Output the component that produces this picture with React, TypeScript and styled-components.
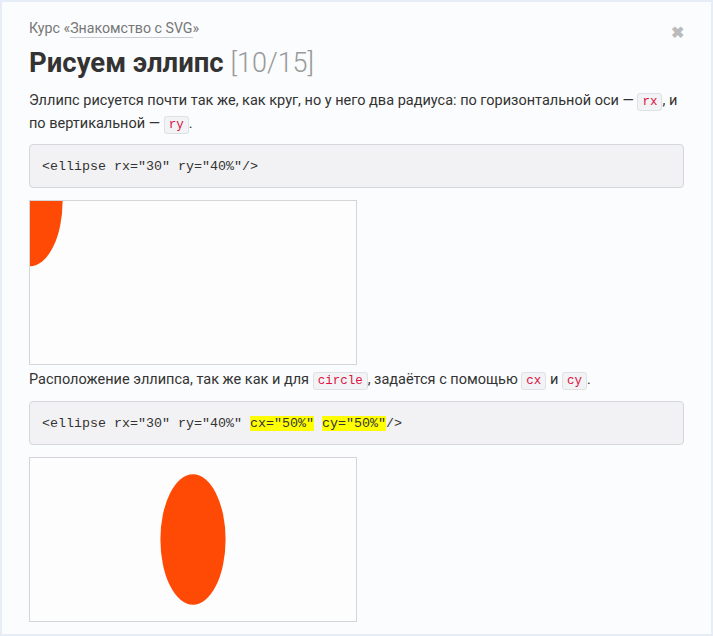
import React from "react";
import styled, { createGlobalStyle } from "styled-components";

const Global = createGlobalStyle`
  html, body { margin: 0; padding: 0; background: #e9eff7; }
  body { font-family: Roboto, "Liberation Sans", Arial, sans-serif; }
`;

const Frame = styled.div`
  width: 713px;
  height: 636px;
  box-sizing: border-box;
  border: 2px solid #e6edf6;
  background: #fbfcfd;
  overflow: hidden;
`;

const Panel = styled.div`
  position: relative;
  padding: 16px 27px 0 27px;
  color: #333;
`;

const Close = styled.span`
  position: absolute;
  top: 21px;
  right: 27px;
  font-size: 16px;
  font-weight: bold;
  color: #bbb;
  line-height: 20px;
`;

const Crumb = styled.div`
  font-size: 14.2px;
  line-height: 20px;
  color: #777;
`;

const CrumbLink = styled.span`
  border-bottom: 1px solid #c9ccd2;
  padding-bottom: 1px;
`;

const Title = styled.h1`
  margin: 8px 0 0 0;
  font-size: 27.5px;
  line-height: 34px;
  font-weight: bold;
  color: #333;
`;

const Counter = styled.span`
  font-weight: 300;
  font-size: 27px;
  color: #999;
`;

const Para = styled.p<{ $top?: number }>`
  margin: ${(p) => p.$top ?? 12}px 0 0 0;
  font-size: 14.5px;
  line-height: 22px;
  color: #333;
`;

const Code = styled.code`
  font-family: "Liberation Mono", monospace;
  font-size: 12.5px;
  color: #dd1144;
  background: #f2f3f5;
  border: 1px solid #e0e1e5;
  border-radius: 3px;
  padding: 1px 4px;
`;

const Pre = styled.pre<{ $top: number }>`
  margin: ${(p) => p.$top}px 0 0 0;
  padding: 0 12px;
  height: 42px;
  display: flex;
  align-items: center;
  background: #f2f2f4;
  border: 1px solid #d6d7db;
  border-radius: 4px;
  font-family: "Liberation Mono", monospace;
  font-size: 13.33px;
  color: #333;
`;

const Mark = styled.span`
  background: #ffff00;
`;

const Stage = styled.div`
  margin-top: 12px;
  width: 328px;
  height: 165px;
  box-sizing: border-box;
  border: 1px solid #d4d5d9;
  background: #fdfdfe;
  svg { display: block; width: 100%; height: 100%; }
`;

export default function App() {
  return (
    <>
      <Global />
      <Frame>
        <Panel>
          <Close>✖</Close>
          <Crumb>
            Курс «<CrumbLink>Знакомство с SVG</CrumbLink>»
          </Crumb>
          <Title>
            Рисуем эллипс <Counter>[10/15]</Counter>
          </Title>
          <Para $top={10}>
            Эллипс рисуется почти так же, как круг, но у него два радиуса: по горизонтальной оси — <Code>rx</Code>, и
            по вертикальной — <Code>ry</Code>.
          </Para>
          <Pre $top={8}>
            <span>{'<ellipse rx="30" ry="40%"/>'}</span>
          </Pre>
          <Stage>
            <svg viewBox="0 0 300 150" preserveAspectRatio="none">
              <ellipse rx="30" ry="40%" fill="#ff4a05" />
            </svg>
          </Stage>
          <Para $top={4}>
            Расположение эллипса, так же как и для <Code>circle</Code>, задаётся с помощью <Code>cx</Code> и{" "}
            <Code>cy</Code>.
          </Para>
          <Pre $top={9}>
            <span>
              {'<ellipse rx="30" ry="40%" '}
              <Mark>{'cx="50%"'}</Mark> <Mark>{'cy="50%"'}</Mark>
              {"/>"}
            </span>
          </Pre>
          <Stage>
            <svg viewBox="0 0 300 150" preserveAspectRatio="none">
              <ellipse rx="30" ry="40%" cx="50%" cy="50%" fill="#ff4a05" />
            </svg>
          </Stage>
        </Panel>
      </Frame>
    </>
  );
}
